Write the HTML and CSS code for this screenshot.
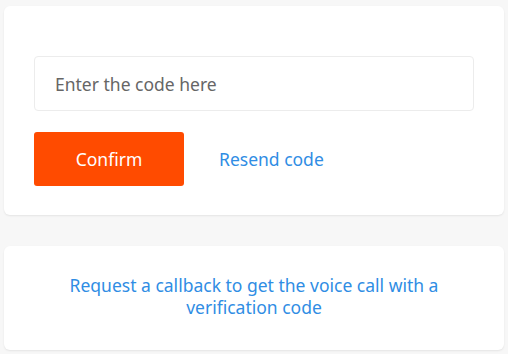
FILE: index.html
```html
<!DOCTYPE html>
<html lang="en">
<head>
  <meta charset="UTF-8" />
  <meta name="viewport" content="width=device-width, initial-scale=1.0"/>
  <title>Verification code</title>
  <link rel="stylesheet" href="styles.css">
</head>
<body>
  <div class="card code-card">
    <input type="text" class="code-input" placeholder="Enter the code here" />
    <div class="actions">
      <button class="confirm-btn">Confirm</button>
      <a href="#" class="link">Resend code</a>
    </div>
  </div>

  <div class="card callback-card">
    <a href="#" class="link">Request a callback to get the voice call with a verification code</a>
  </div>
</body>
</html>
```

FILE: styles.css
```css
body {
  margin: 0;
  padding: 6px 4px 4px 4px;
  background: #f7f7f7;
  font-family: "Noto Sans", "Open Sans", sans-serif;
  font-size: 17.5px;
}
.card {
  background: #fff;
  border-radius: 6px;
  box-shadow: 0 1px 2px rgba(0,0,0,0.08);
}
.code-card {
  padding: 50px 30px 29px 30px;
  height: 130px;
}
.code-input {
  display: block;
  box-sizing: border-box;
  width: 100%;
  height: 55px;
  padding: 0 20px;
  border: 1px solid #ececec;
  border-radius: 4px;
  font-family: inherit;
  font-size: 17.5px;
  color: #333;
  outline: none;
}
.code-input::placeholder {
  color: #666;
}
.actions {
  display: flex;
  align-items: center;
  margin-top: 21px;
}
.confirm-btn {
  width: 150px;
  height: 54px;
  border: none;
  border-radius: 3px;
  background: #ff4b00;
  color: #fff;
  font-family: inherit;
  font-size: 17.5px;
  cursor: pointer;
}
.actions .link {
  margin-left: 35px;
}
.link {
  color: #2f8de4;
  text-decoration: none;
}
.callback-card {
  margin-top: 31px;
  padding: 28px 50px 0;
  height: 76px;
  text-align: center;
  line-height: 22px;
}
```
